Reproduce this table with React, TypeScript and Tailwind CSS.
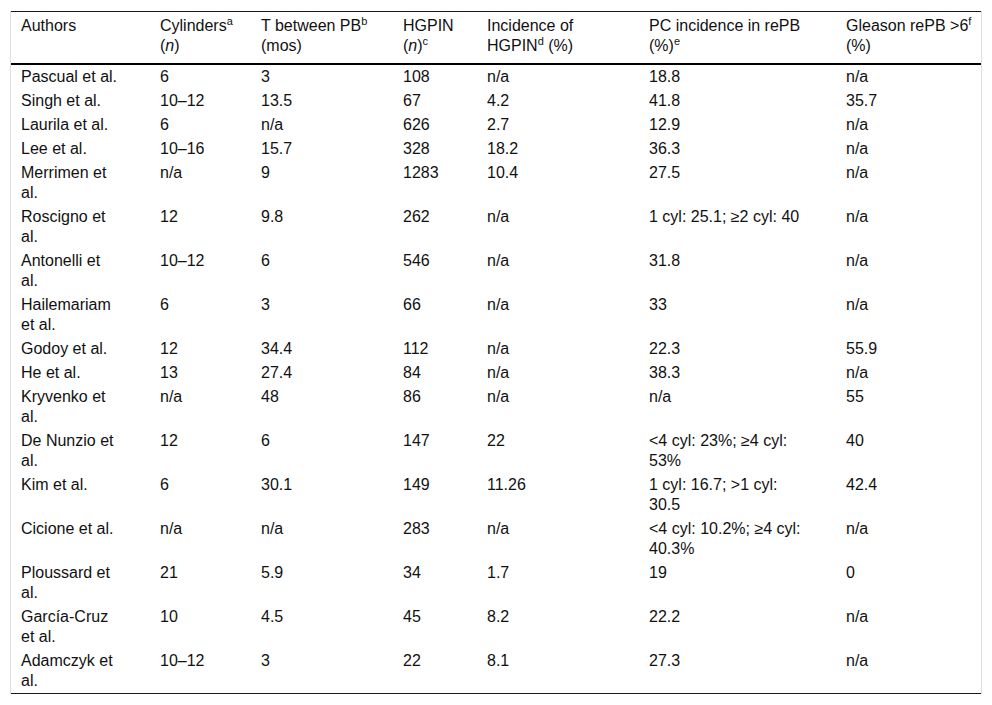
import React from "react"

type Row = [string, string, string, string, string, string, string]

const rows: Row[] = [
  ["Pascual et al.", "6", "3", "108", "n/a", "18.8", "n/a"],
  ["Singh et al.", "10–12", "13.5", "67", "4.2", "41.8", "35.7"],
  ["Laurila et al.", "6", "n/a", "626", "2.7", "12.9", "n/a"],
  ["Lee et al.", "10–16", "15.7", "328", "18.2", "36.3", "n/a"],
  ["Merrimen et al.", "n/a", "9", "1283", "10.4", "27.5", "n/a"],
  ["Roscigno et al.", "12", "9.8", "262", "n/a", "1 cyl: 25.1; ≥2 cyl: 40", "n/a"],
  ["Antonelli et al.", "10–12", "6", "546", "n/a", "31.8", "n/a"],
  ["Hailemariam et al.", "6", "3", "66", "n/a", "33", "n/a"],
  ["Godoy et al.", "12", "34.4", "112", "n/a", "22.3", "55.9"],
  ["He et al.", "13", "27.4", "84", "n/a", "38.3", "n/a"],
  ["Kryvenko et al.", "n/a", "48", "86", "n/a", "n/a", "55"],
  ["De Nunzio et al.", "12", "6", "147", "22", "<4 cyl: 23%; ≥4 cyl: 53%", "40"],
  ["Kim et al.", "6", "30.1", "149", "11.26", "1 cyl: 16.7; >1 cyl: 30.5", "42.4"],
  ["Cicione et al.", "n/a", "n/a", "283", "n/a", "<4 cyl: 10.2%; ≥4 cyl: 40.3%", "n/a"],
  ["Ploussard et al.", "21", "5.9", "34", "1.7", "19", "0"],
  ["García-Cruz et al.", "10", "4.5", "45", "8.2", "22.2", "n/a"],
  ["Adamczyk et al.", "10–12", "3", "22", "8.1", "27.3", "n/a"],
]

// column widths + right padding (controls where text wraps)
const cols = [
  { w: "w-[139px]", pr: "pr-[31px]" },
  { w: "w-[101px]", pr: "pr-[11px]" },
  { w: "w-[142px]", pr: "pr-[12px]" },
  { w: "w-[84px]", pr: "pr-[8px]" },
  { w: "w-[162px]", pr: "pr-[27px]" },
  { w: "w-[197px]", pr: "pr-[30px]" },
  { w: "w-[145px]", pr: "pr-[0px]" },
]

function Sup({ children }: { children: React.ReactNode }) {
  return <sup className="relative -top-[6px] text-[11px] leading-none">{children}</sup>
}

const headers: React.ReactNode[] = [
  "Authors",
  <>
    Cylinders<Sup>a</Sup> (<i>n</i>)
  </>,
  <>
    T between PB<Sup>b</Sup> (mos)
  </>,
  <>
    HGPIN (<i>n</i>)<Sup>c</Sup>
  </>,
  <>
    Incidence of HGPIN<Sup>d</Sup> (%)
  </>,
  <>
    PC incidence in rePB (%)<Sup>e</Sup>
  </>,
  <>
    Gleason rePB &gt;6<Sup>f</Sup> (%)
  </>,
]

export default function App() {
  return (
    <div className="min-h-[705px] bg-white pt-[11px] pl-[10px] font-['Liberation_Sans',Arial,sans-serif] text-[16px] leading-[20px] text-[#111]">
      <div className="w-[972px] border-x border-[#dedede]">
        <table className="w-full table-fixed border-collapse border-t border-b border-[#1a1a1a]">
          <colgroup>
            {cols.map((c, i) => (
              <col key={i} className={c.w} />
            ))}
          </colgroup>
          <thead>
            <tr>
              {headers.map((h, i) => (
                <th
                  key={i}
                  className={`border-b-2 border-black pl-[10px] pt-[4px] pb-[7px] text-left align-top font-normal ${cols[i].pr}`}
                >
                  {h}
                </th>
              ))}
            </tr>
          </thead>
          <tbody>
            {rows.map((r, ri) => (
              <tr key={ri}>
                {r.map((cell, ci) => (
                  <td key={ci} className={`pl-[10px] py-[2px] align-top ${cols[ci].pr}`}>
                    {cell}
                  </td>
                ))}
              </tr>
            ))}
          </tbody>
        </table>
      </div>
    </div>
  )
}
